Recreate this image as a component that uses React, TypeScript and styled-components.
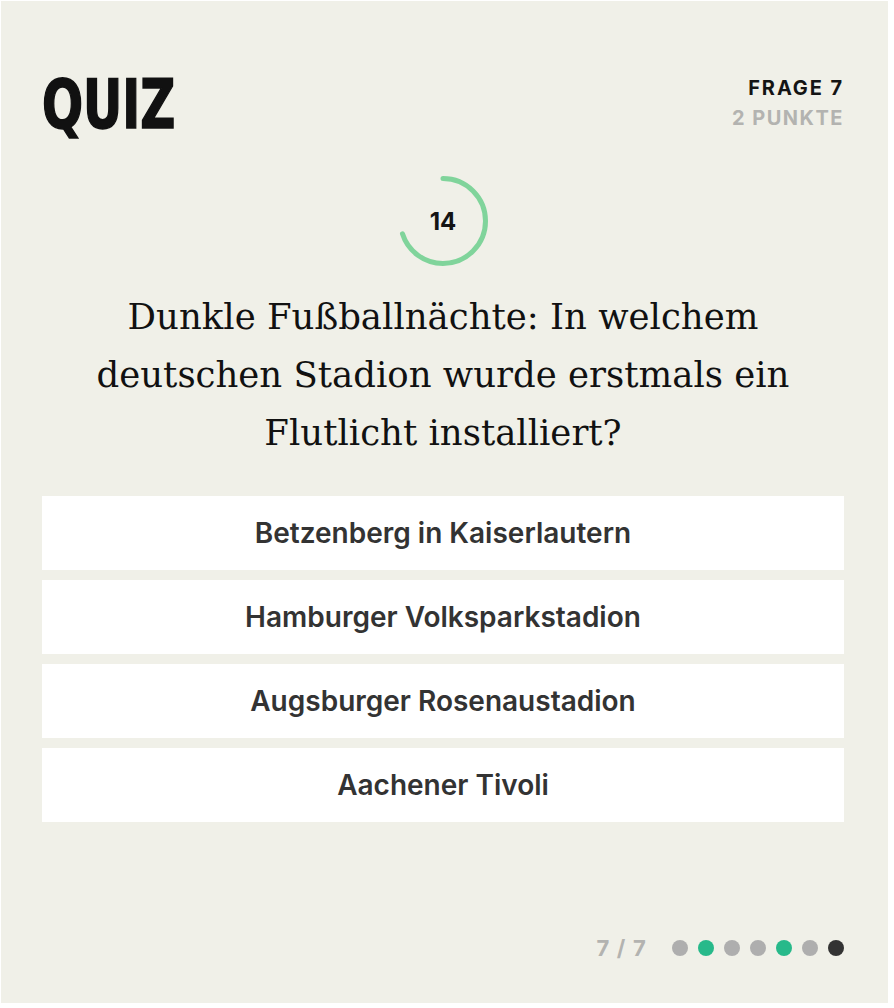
import React from "react";
import styled, { createGlobalStyle } from "styled-components";

const Global = createGlobalStyle`
  html, body { margin: 0; padding: 0; background: #ffffff; }
  * { box-sizing: border-box; }
`;

const Card = styled.div`
  margin: 1px 6px 0 1px;
  width: 887px;
  height: 1002px;
  background: #f0f0e8;
  padding: 70px 44px 0 41px;
  display: flex;
  flex-direction: column;
`;

const Header = styled.div`
  display: flex;
  justify-content: space-between;
  align-items: flex-start;
`;

const Logo = styled.div`
  font-family: "DejaVu Sans Condensed", "DejaVu Sans", sans-serif;
  font-weight: 700;
  font-size: 68px;
  line-height: 68px;
  color: #111111;
  transform: scaleX(0.79);
  transform-origin: left center;
  -webkit-text-stroke: 1.5px #111111;
`;

const Meta = styled.div`
  display: flex;
  flex-direction: column;
  align-items: flex-end;
  padding-top: 2px;
  font-family: Inter, "Noto Sans", sans-serif;
  font-weight: 700;
  font-size: 20px;
  line-height: 30px;
`;

const MetaLine = styled.div<{ $muted?: boolean }>`
  color: ${(p) => (p.$muted ? "#b3b3b0" : "#141414")};
  letter-spacing: ${(p) => (p.$muted ? "1.5px" : "1.9px")};
`;

const TimerWrap = styled.div`
  align-self: center;
  position: relative;
  width: 90px;
  height: 90px;
  margin-top: 37px;
`;

const TimerNum = styled.div`
  position: absolute;
  inset: 0;
  display: flex;
  align-items: center;
  justify-content: center;
  font-family: Inter, "Noto Sans", sans-serif;
  font-weight: 700;
  font-size: 24px;
  color: #141414;
`;

const Question = styled.h1`
  margin: 22px 0 0;
  text-align: center;
  font-family: "DejaVu Serif", "Liberation Serif", serif;
  font-weight: 400;
  font-size: 35.5px;
  line-height: 58px;
  color: #111111;
`;

const Options = styled.div`
  margin-top: 34px;
  display: flex;
  flex-direction: column;
  gap: 10px;
`;

const Option = styled.button`
  height: 74px;
  border: none;
  background: #ffffff;
  font-family: Inter, Roboto, sans-serif;
  font-weight: 600;
  font-size: 28px;
  color: #333333;
  cursor: pointer;
  display: flex;
  align-items: center;
  justify-content: center;
`;

const Footer = styled.div`
  margin-top: auto;
  margin-bottom: 42px;
  display: flex;
  justify-content: flex-end;
  align-items: center;
  gap: 25px;
`;

const Count = styled.div`
  font-family: Inter, "Noto Sans", sans-serif;
  font-weight: 700;
  font-size: 22px;
  letter-spacing: 1.2px;
  color: #b3b3b0;
`;

const Dots = styled.div`
  display: flex;
  gap: 10px;
`;

const Dot = styled.span<{ $c: string }>`
  width: 16px;
  height: 16px;
  border-radius: 50%;
  background: ${(p) => p.$c};
`;

const dots = ["#aeaeae", "#27b98a", "#aeaeae", "#aeaeae", "#27b98a", "#aeaeae", "#333333"];

const options = [
  "Betzenberg in Kaiserlautern",
  "Hamburger Volksparkstadion",
  "Augsburger Rosenaustadion",
  "Aachener Tivoli",
];

export default function App() {
  const r = 42.5;
  const c = 2 * Math.PI * r;
  const frac = 14 / 20;
  return (
    <>
      <Global />
      <Card>
        <Header>
          <Logo>QUIZ</Logo>
          <Meta>
            <MetaLine>FRAGE 7</MetaLine>
            <MetaLine $muted>2 PUNKTE</MetaLine>
          </Meta>
        </Header>
        <TimerWrap>
          <svg width="90" height="90" viewBox="0 0 90 90">
            <circle
              cx="45"
              cy="45"
              r={r}
              fill="none"
              stroke="#80d49b"
              strokeWidth="5"
              strokeLinecap="round"
              strokeDasharray={`${c * frac} ${c}`}
              transform="rotate(-90 45 45)"
            />
          </svg>
          <TimerNum>14</TimerNum>
        </TimerWrap>
        <Question>
          Dunkle Fußballnächte: In welchem
          <br />
          deutschen Stadion wurde erstmals ein
          <br />
          Flutlicht installiert?
        </Question>
        <Options>
          {options.map((o) => (
            <Option key={o}>{o}</Option>
          ))}
        </Options>
        <Footer>
          <Count>7 / 7</Count>
          <Dots>
            {dots.map((d, i) => (
              <Dot key={i} $c={d} />
            ))}
          </Dots>
        </Footer>
      </Card>
    </>
  );
}
